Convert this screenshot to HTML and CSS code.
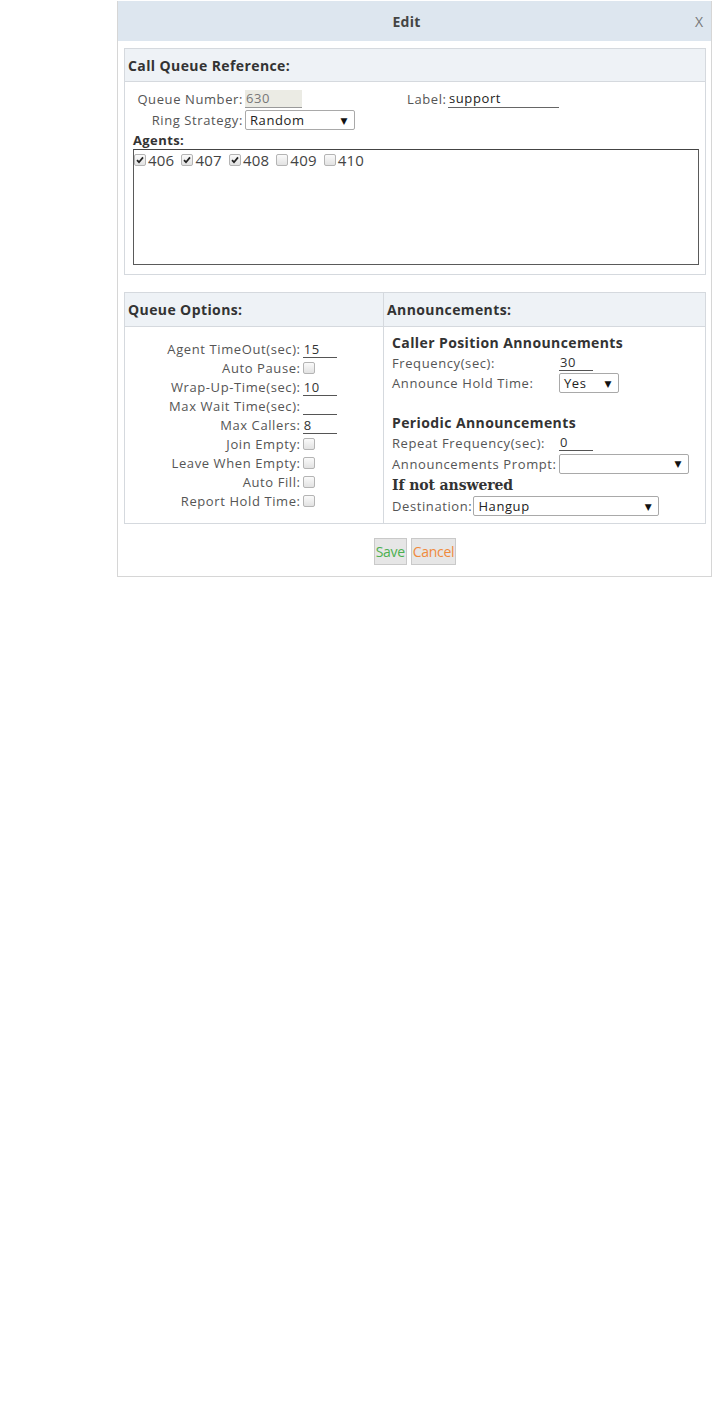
FILE: index.html
```html
<!DOCTYPE html>
<html>
<head>
<meta charset="utf-8">
<title>Edit</title>
<link rel="stylesheet" href="styles.css">
</head>
<body>
<div class="dialog">
  <div class="titlebar">
    <span class="title">Edit</span>
    <span class="close">X</span>
  </div>
  <div class="dbody">
    <section class="panel">
      <div class="panel-head">Call Queue Reference:</div>
      <div class="ref">
        <div class="ref-grid">
          <span class="lbl">Queue Number:</span>
          <span class="field readonly w57">630</span>
          <span class="lbl">Label:</span>
          <span class="field w111">support</span>
          <span class="lbl">Ring Strategy:</span>
          <span class="select w110"><span class="sv">Random</span><span class="arr">&#9660;</span></span>
        </div>
        <div class="agents-title">Agents:</div>
        <div class="agents">
          <span class="agent"><span class="cb on"><svg viewBox="0 0 11 11"><path d="M2.2 5.6 L4.4 7.9 L8.8 2.6"/></svg></span>406</span>
          <span class="agent"><span class="cb on"><svg viewBox="0 0 11 11"><path d="M2.2 5.6 L4.4 7.9 L8.8 2.6"/></svg></span>407</span>
          <span class="agent"><span class="cb on"><svg viewBox="0 0 11 11"><path d="M2.2 5.6 L4.4 7.9 L8.8 2.6"/></svg></span>408</span>
          <span class="agent"><span class="cb"></span>409</span>
          <span class="agent"><span class="cb"></span>410</span>
        </div>
      </div>
    </section>

    <section class="panel panel2">
      <div class="panel-head split">Queue Options:</div>
      <div class="panel-head">Announcements:</div>
      <div class="opts split">
        <div class="opts-grid">
          <span class="lbl">Agent TimeOut(sec):</span><span class="uline">15</span>
          <span class="lbl">Auto Pause:</span><span class="cb"></span>
          <span class="lbl">Wrap-Up-Time(sec):</span><span class="uline">10</span>
          <span class="lbl">Max Wait Time(sec):</span><span class="uline"></span>
          <span class="lbl">Max Callers:</span><span class="uline">8</span>
          <span class="lbl">Join Empty:</span><span class="cb"></span>
          <span class="lbl">Leave When Empty:</span><span class="cb"></span>
          <span class="lbl">Auto Fill:</span><span class="cb"></span>
          <span class="lbl">Report Hold Time:</span><span class="cb"></span>
        </div>
      </div>
      <div class="ann">
        <div class="h4">Caller Position Announcements</div>
        <div class="arow r19"><span>Frequency(sec):</span><span class="uline">30</span></div>
        <div class="arow r22"><span>Announce Hold Time:</span><span class="select w60"><span class="sv">Yes</span><span class="arr">&#9660;</span></span></div>
        <div class="spacer"></div>
        <div class="h4">Periodic Announcements</div>
        <div class="arow r19"><span>Repeat Frequency(sec):</span><span class="uline">0</span></div>
        <div class="arow r23"><span>Announcements Prompt:</span><span class="select w130"><span class="sv"></span><span class="arr">&#9660;</span></span></div>
        <div class="h4 serif">If not answered</div>
        <div class="drow"><span>Destination:</span><span class="select w186"><span class="sv">Hangup</span><span class="arr">&#9660;</span></span></div>
      </div>
    </section>

    <div class="buttons">
      <span class="btn save">Save</span>
      <span class="btn cancel">Cancel</span>
    </div>
  </div>
</div>
</body>
</html>
```

FILE: styles.css
```css
body {
  margin: 0;
  font-family: "Open Sans", "DejaVu Sans", sans-serif;
  font-size: 13px;
  letter-spacing: 0.6px;
  color: #555;
  background: #fff;
}

.dialog {
  margin: 1px 0 0 117px;
  width: 595px;
  box-sizing: border-box;
  border: 1px solid #d6d6d6;
  border-top: none;
  background: #fff;
}

.titlebar {
  height: 40px;
  background: #dde6ef;
  display: flex;
  align-items: center;
}

.title {
  flex: 1;
  text-align: center;
  font-weight: bold;
  font-size: 14px;
  letter-spacing: 0.3px;
  color: #444;
}

.close {
  width: 16px;
  color: #777;
  font-size: 14px;
}

.dbody {
  padding: 7px 5px 11px 6px;
}

.panel {
  border: 1px solid #d5d9de;
}

.panel-head {
  height: 32px;
  background: #eef2f6;
  border-bottom: 1px solid #d5d9de;
  font-weight: bold;
  font-size: 14px;
  letter-spacing: 0.4px;
  color: #333;
  padding-left: 3px;
  display: flex;
  align-items: center;
}

.ref {
  padding: 8px 6px 9px 0;
}

.ref-grid {
  display: grid;
  grid-template-columns: 118px 160px 39px 1fr;
  column-gap: 2px;
  row-gap: 2px;
  align-items: center;
}

.lbl {
  text-align: right;
  white-space: nowrap;
}

.field {
  display: inline-block;
  height: 18px;
  line-height: 17px;
  border-bottom: 1px solid #666;
  color: #222;
  padding-left: 1px;
  box-sizing: border-box;
}

.field.readonly {
  background: #ebebe4;
  color: #777;
  border-bottom-color: #999;
}

.w57 { width: 57px; }
.w111 { width: 111px; }
.w110 { width: 110px; }
.w60 { width: 60px; }
.w130 { width: 130px; }
.w186 { width: 186px; }

.select {
  display: inline-flex;
  align-items: center;
  justify-content: space-between;
  height: 20px;
  box-sizing: border-box;
  border: 1px solid #a9a9a9;
  border-radius: 2px;
  background: #fff;
  color: #222;
  padding: 0 6px 0 4px;
}

.arr {
  font-size: 9px;
  color: #111;
}

.agents-title {
  margin: 1px 0 0 8px;
  font-weight: bold;
  color: #333;
  line-height: 18px;
  letter-spacing: 0.4px;
}

.agents {
  margin-left: 8px;
  height: 116px;
  box-sizing: border-box;
  border: 1px solid #5a5a5a;
  border-top-color: #444;
  padding: 1px 0 0 0;
  font-size: 15px;
  letter-spacing: 0.2px;
  color: #444;
  line-height: 18px;
}

.agent {
  display: inline-flex;
  align-items: center;
  gap: 2px;
  margin-right: 3px;
}

.cb {
  display: inline-block;
  width: 12px;
  height: 12px;
  box-sizing: border-box;
  border: 1px solid #b4b4b4;
  border-radius: 2px;
  background: linear-gradient(#fafafa, #e2e2e2);
}

.cb svg {
  display: block;
  width: 10px;
  height: 10px;
  fill: none;
  stroke: #222;
  stroke-width: 1.9;
}

.panel2 {
  margin-top: 17px;
  display: grid;
  grid-template-columns: 259px 1fr;
}

.panel2 .panel-head {
  height: 33px;
}

.split {
  border-right: 1px solid #d5d9de;
}

.opts {
  display: flex;
  justify-content: center;
  align-items: center;
}

.opts-grid {
  display: grid;
  grid-template-columns: auto 35px;
  grid-auto-rows: 19px;
  column-gap: 2px;
  align-items: center;
  margin-right: 3px;
}

.uline {
  display: inline-block;
  width: 34px;
  height: 17px;
  line-height: 17px;
  border-bottom: 1px solid #555;
  color: #333;
  padding-left: 1px;
  box-sizing: border-box;
}

.ann {
  padding: 6px 6px 6px 8px;
}

.h4 {
  font-weight: bold;
  font-size: 14px;
  letter-spacing: 0.4px;
  color: #333;
  line-height: 20px;
}

.h4.serif {
  font-family: "DejaVu Serif", "Liberation Serif", serif;
  font-size: 14px;
  letter-spacing: -0.1px;
}

.arow {
  display: grid;
  grid-template-columns: 167px auto;
  align-items: center;
  justify-items: start;
}

.r19 { height: 19px; }
.r22 { height: 22px; }
.r23 { height: 23px; }

.spacer {
  height: 19px;
}

.drow {
  height: 22px;
  display: flex;
  align-items: center;
  gap: 1px;
}

.buttons {
  padding-top: 14px;
  display: flex;
  justify-content: center;
  gap: 4px;
}

.btn {
  height: 27px;
  line-height: 25px;
  box-sizing: border-box;
  border: 1px solid #c9c9c9;
  background: #e6e6e6;
  font-size: 14px;
  padding: 0 1px;
  letter-spacing: -0.3px;
}

.save { color: #4cb050; }
.cancel { color: #f08a3c; }
```
